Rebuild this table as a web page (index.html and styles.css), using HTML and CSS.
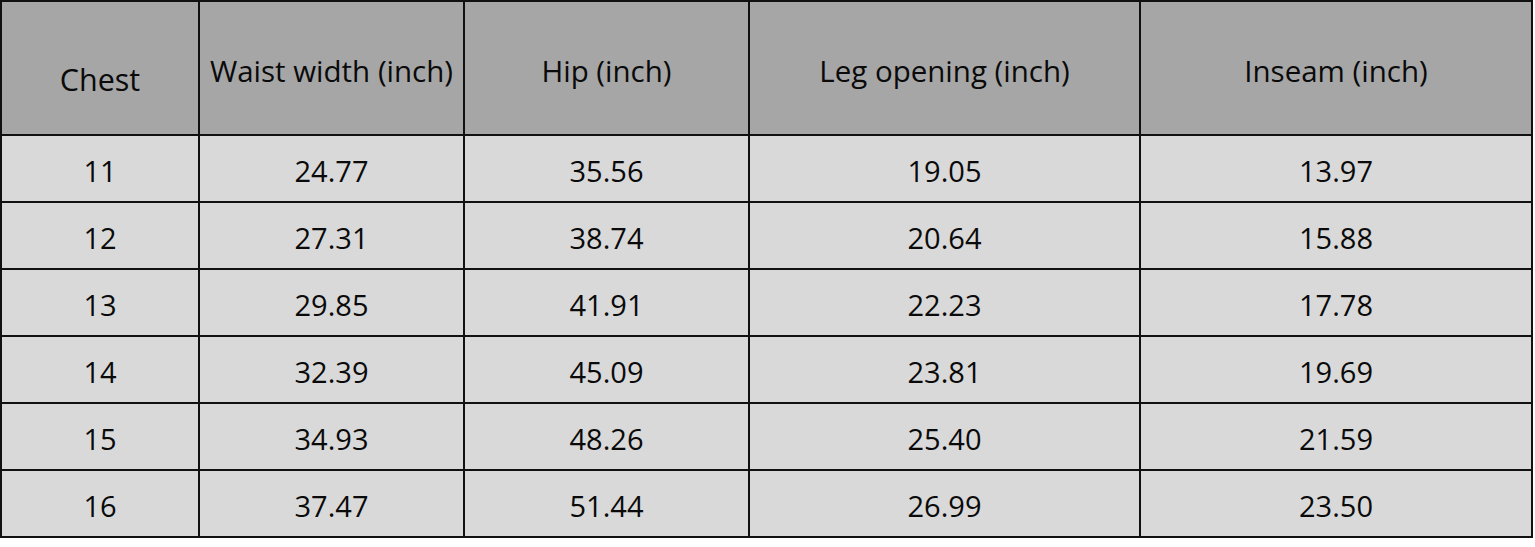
FILE: index.html
```html
<!DOCTYPE html>
<html lang="en">
<head>
<meta charset="utf-8">
<title>Size chart</title>
<link rel="stylesheet" href="styles.css">
</head>
<body>
<table class="size-table">
  <colgroup>
    <col class="c1"><col class="c2"><col class="c3"><col class="c4"><col class="c5">
  </colgroup>
  <thead>
    <tr class="head-row">
      <th class="chest">Chest</th>
      <th>Waist width (inch)</th>
      <th>Hip (inch)</th>
      <th>Leg opening (inch)</th>
      <th>Inseam (inch)</th>
    </tr>
  </thead>
  <tbody>
    <tr><td>11</td><td>24.77</td><td>35.56</td><td>19.05</td><td>13.97</td></tr>
    <tr><td>12</td><td>27.31</td><td>38.74</td><td>20.64</td><td>15.88</td></tr>
    <tr><td>13</td><td>29.85</td><td>41.91</td><td>22.23</td><td>17.78</td></tr>
    <tr><td>14</td><td>32.39</td><td>45.09</td><td>23.81</td><td>19.69</td></tr>
    <tr><td>15</td><td>34.93</td><td>48.26</td><td>25.40</td><td>21.59</td></tr>
    <tr><td>16</td><td>37.47</td><td>51.44</td><td>26.99</td><td>23.50</td></tr>
  </tbody>
</table>
</body>
</html>
```
FILE: styles.css
```css
html, body {
  margin: 0;
  padding: 0;
  background: #ffffff;
}

.size-table {
  border-collapse: separate;
  border-spacing: 2px;
  background: #111111;
  table-layout: fixed;
  width: 1533px;
  font-family: "Open Sans", "Noto Sans", sans-serif;
  color: #0a0a0a;
}

.c1 { width: 196px; }
.c2 { width: 263px; }
.c3 { width: 283px; }
.c4 { width: 389px; }
.c5 { width: 390px; }

.size-table th,
.size-table td {
  padding: 0;
  text-align: center;
  vertical-align: middle;
  white-space: nowrap;
}

.size-table th {
  background: #a6a6a6;
  font-weight: 400;
  font-size: 29.5px;
  height: 132px;
  padding-top: 4px;
  box-sizing: border-box;
}

.size-table th.chest {
  font-size: 30.5px;
  padding-top: 22px;
}

.size-table td {
  background: #d9d9d9;
  font-size: 29px;
  height: 65px;
  padding-top: 4px;
  box-sizing: border-box;
}
```
